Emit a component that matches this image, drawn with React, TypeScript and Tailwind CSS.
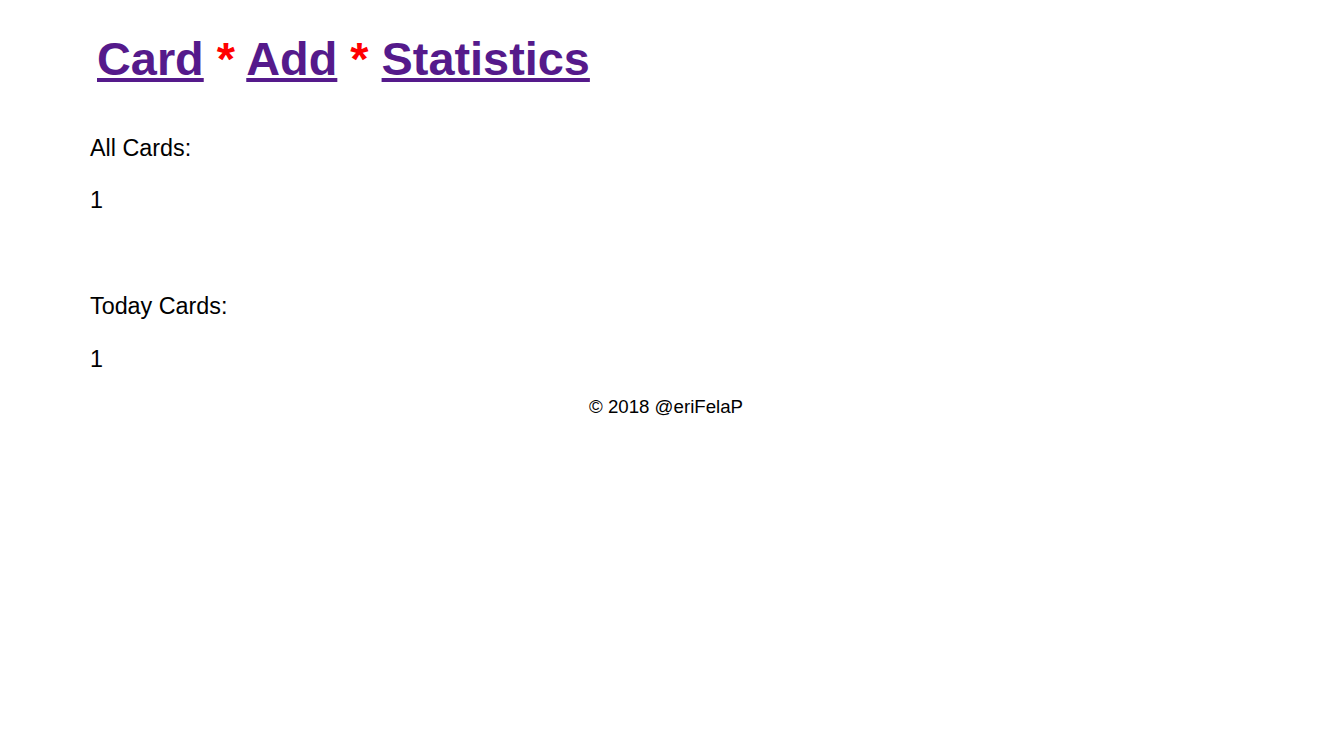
const links = ["Card", "Add", "Statistics"];

export default function App() {
  return (
    <div className="min-h-screen bg-white text-black" style={{ fontFamily: '"Liberation Sans", Arial, sans-serif' }}>
      {/* Nav */}
      <h1 className="pt-[32px] pl-[97px] text-[46.85px] leading-[54px] font-bold whitespace-pre">
        {links.map((name, i) => (
          <span key={name}>
            {i > 0 && <span className="text-[#ff0000]"> * </span>}
            <a href="#" className="text-[#551a8b] underline">
              {name}
            </a>
          </span>
        ))}
      </h1>

      {/* Counts */}
      <div className="pl-[90px] text-[23.33px] leading-[28px]">
        <p className="mt-[48px]">All Cards:</p>
        <p className="mt-[24px]">1</p>
        <p className="mt-[78px]">Today Cards:</p>
        <p className="mt-[25px]">1</p>
      </div>

      <footer className="mt-[23px] pl-[4px] text-center text-[18.67px] leading-[22px]">© 2018 @eriFelaP</footer>
    </div>
  );
}
